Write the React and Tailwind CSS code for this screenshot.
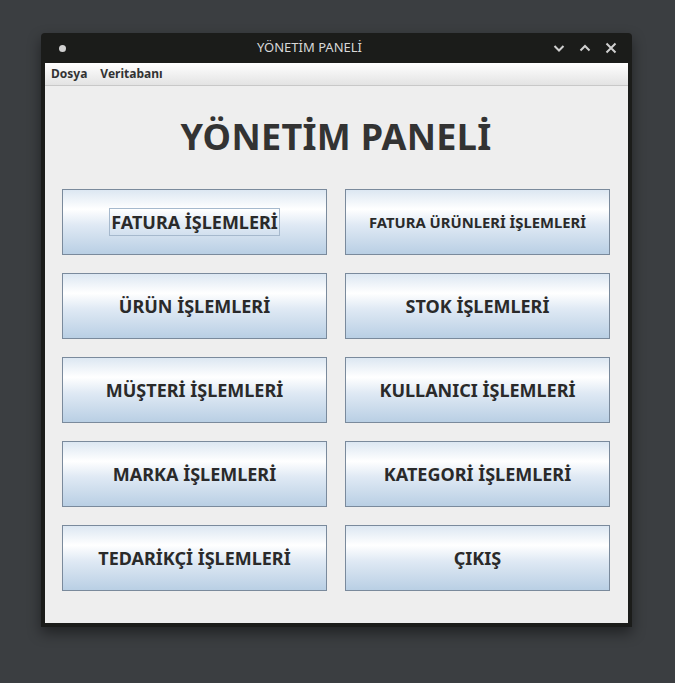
import React from "react";

const buttons = [
  ["FATURA İŞLEMLERİ", "FATURA ÜRÜNLERİ İŞLEMLERİ"],
  ["ÜRÜN İŞLEMLERİ", "STOK İŞLEMLERİ"],
  ["MÜŞTERİ İŞLEMLERİ", "KULLANICI İŞLEMLERİ"],
  ["MARKA İŞLEMLERİ", "KATEGORİ İŞLEMLERİ"],
  ["TEDARİKÇİ İŞLEMLERİ", "ÇIKIŞ"],
];

function Btn({ label, focus, small }) {
  return (
    <div className="h-[66px] border border-[#7a8a9c] bg-[linear-gradient(to_bottom,#dce7f2_0%,#ffffff_30%,#dfe9f4_55%,#b9cfe4_100%)] flex items-center justify-center">
      <span
        className={
          (small ? "text-[14.8px] " : "text-[18px] ") +
          "font-bold text-[#2a2a2a] leading-none " +
          (focus ? "border border-[#a6b9cd] px-[1px] h-[28px] flex items-center" : "")
        }
      >
        {label}
      </span>
    </div>
  );
}

export default function App() {
  return (
    <div className="w-[675px] h-[683px] bg-[#3b3e41] pt-[33px] pl-[41px] font-['Noto_Sans',sans-serif]">
      <div className="w-[591px] h-[594px] bg-[#1b1c1a] rounded-t-[4px] flex flex-col shadow-[0_6px_14px_rgba(0,0,0,0.45)]">
        <div className="h-[30px] flex items-center relative">
          <div className="w-[7px] h-[7px] rounded-full bg-[#d0d0d0] ml-[18px]" />
          <div className="absolute left-0 right-[54px] top-0 h-[30px] flex items-center justify-center text-[13px] text-[#d8d8d8] pointer-events-none">
            YÖNETİM PANELİ
          </div>
          <div className="ml-auto mr-[15px] flex items-center gap-[14px] text-[#d0d0d0]">
            <svg width="12" height="12" viewBox="0 0 12 12"><path d="M1.5 4 L6 8.5 L10.5 4" stroke="currentColor" strokeWidth="2" fill="none" /></svg>
            <svg width="12" height="12" viewBox="0 0 12 12"><path d="M1.5 8.5 L6 4 L10.5 8.5" stroke="currentColor" strokeWidth="2" fill="none" /></svg>
            <svg width="12" height="12" viewBox="0 0 12 12"><path d="M1.5 1.5 L10.5 10.5 M10.5 1.5 L1.5 10.5" stroke="currentColor" strokeWidth="2" fill="none" /></svg>
          </div>
        </div>
        <div className="mx-[4px] mb-[4px] flex-1 bg-[#eeeeee] flex flex-col">
          <div className="h-[23px] bg-[linear-gradient(to_bottom,#ffffff,#e3e3e3)] border-b border-[#c8c8c8] flex items-center gap-[13px] pl-[6px] text-[12px] font-bold text-[#333333]">
            <span>Dosya</span>
            <span>Veritabanı</span>
          </div>
          <div className="flex-1 flex flex-col pl-[17px] pr-[18px]">
            <div className="h-[103px] flex items-center justify-center pb-[1px] text-[36px] font-bold text-[#333333] tracking-[0.3px]">
              YÖNETİM PANELİ
            </div>
            <div className="grid grid-cols-2 gap-x-[18px] gap-y-[18px]">
              {buttons.map(([a, b], i) => (
                <React.Fragment key={i}>
                  <Btn label={a} focus={i === 0} />
                  <Btn label={b} small={i === 0} />
                </React.Fragment>
              ))}
            </div>
          </div>
        </div>
      </div>
    </div>
  );
}
